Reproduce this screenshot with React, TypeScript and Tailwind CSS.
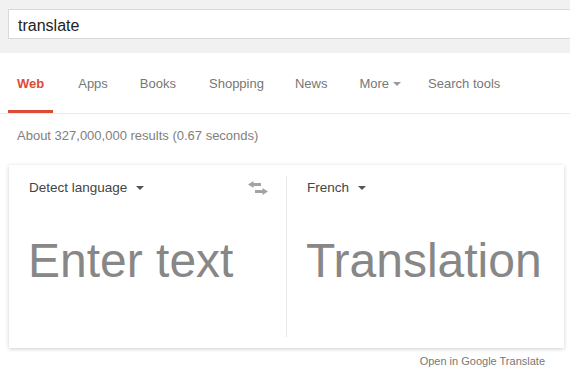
import React from 'react';

const NAV_ITEMS = [
    { label: 'Apps', cls: 'pl-[9px] pr-[7px]' },
    { label: 'Books', cls: 'pl-[9px] pr-[8px]' },
    { label: 'Shopping', cls: 'pl-[9px] pr-[6px]' },
    { label: 'News', cls: 'pl-[9px] pr-[8px]' },
];

const Caret = ({ className }: { className: string }) => (
    <svg width="8" height="4" viewBox="0 0 8 4" className={className}>
        <polygon points="0,0 8,0 4,4" fill="currentColor" />
    </svg>
);

const SwapIcon = () => (
    <svg width="20" height="14" viewBox="0 0 20 14" className="text-[#a3a3a3]">
        <polygon points="0,3.5 5.5,0 5.5,7" fill="currentColor" />
        <rect x="5" y="2" width="8" height="3" fill="currentColor" />
        <rect x="7" y="9" width="8.5" height="3" fill="currentColor" />
        <polygon points="14.5,7 20,10.5 14.5,14" fill="currentColor" />
    </svg>
);

const App: React.FC = () => {
    return (
        <div className="w-[570px] h-[374px] overflow-hidden bg-white font-['Liberation_Sans',Arial,sans-serif]">
            {/* search bar */}
            <div className="h-[53px] bg-[#f1f1f1] pt-[9px] pl-[8px]">
                <div className="w-[600px] h-[30px] bg-white border border-[#d9d9d9] flex items-center pl-[9px] pt-[3px] text-[16px] text-[#222]">
                    translate
                </div>
            </div>

            {/* tabs */}
            <div className="h-[61px] border-b border-[#ebebeb] flex pl-[8px] gap-[16px] text-[13px] text-[#777]">
                <div className="relative px-[9px] pt-[2px] flex items-center font-bold text-[#dd4b39]">
                    Web
                    <div className="absolute left-0 right-0 bottom-0 h-[3px] bg-[#dd4b39]" />
                </div>
                {NAV_ITEMS.map(item => (
                    <div key={item.label} className={`${item.cls} pt-[2px] flex items-center`}>{item.label}</div>
                ))}
                <div className="pl-[8px] pr-[3px] pt-[2px] flex items-center gap-[4px]">
                    More
                    <Caret className="text-[#999]" />
                </div>
                <div className="px-[8px] pt-[2px] flex items-center">Search tools</div>
            </div>

            <div className="pl-[17px] pt-[14px] text-[13px] leading-[16px] text-[#808080]">
                About 327,000,000 results (0.67 seconds)
            </div>

            {/* translate card */}
            <div className="ml-[9px] mt-[21px] w-[555px] h-[183px] bg-white shadow-[0_1px_4px_rgba(0,0,0,0.2)] flex">
                <div className="w-[277px] flex flex-col">
                    <div className="h-[44px] pt-[2px] flex items-center pl-[20px] pr-[18px] text-[13.5px] text-[#444]">
                        Detect language
                        <Caret className="ml-[9px] text-[#555]" />
                        <div className="ml-auto flex"><SwapIcon /></div>
                    </div>
                    <div className="mt-[28px] pl-[19px] text-[48px] leading-[48px] text-[#878787]">Enter text</div>
                </div>
                <div className="mt-[11px] mb-[11px] w-px bg-[#e8e8e8]" />
                <div className="flex-1 flex flex-col">
                    <div className="h-[44px] pt-[2px] flex items-center pl-[20px] text-[13.5px] text-[#444]">
                        French
                        <Caret className="ml-[9px] text-[#555]" />
                    </div>
                    <div className="mt-[28px] pl-[19px] text-[48px] leading-[48px] text-[#878787]">Translation</div>
                </div>
            </div>

            <div className="mt-[7px] pr-[25px] text-right text-[11px] leading-[13px] text-[#777]">
                Open in Google Translate
            </div>
        </div>
    );
};

export default App;
